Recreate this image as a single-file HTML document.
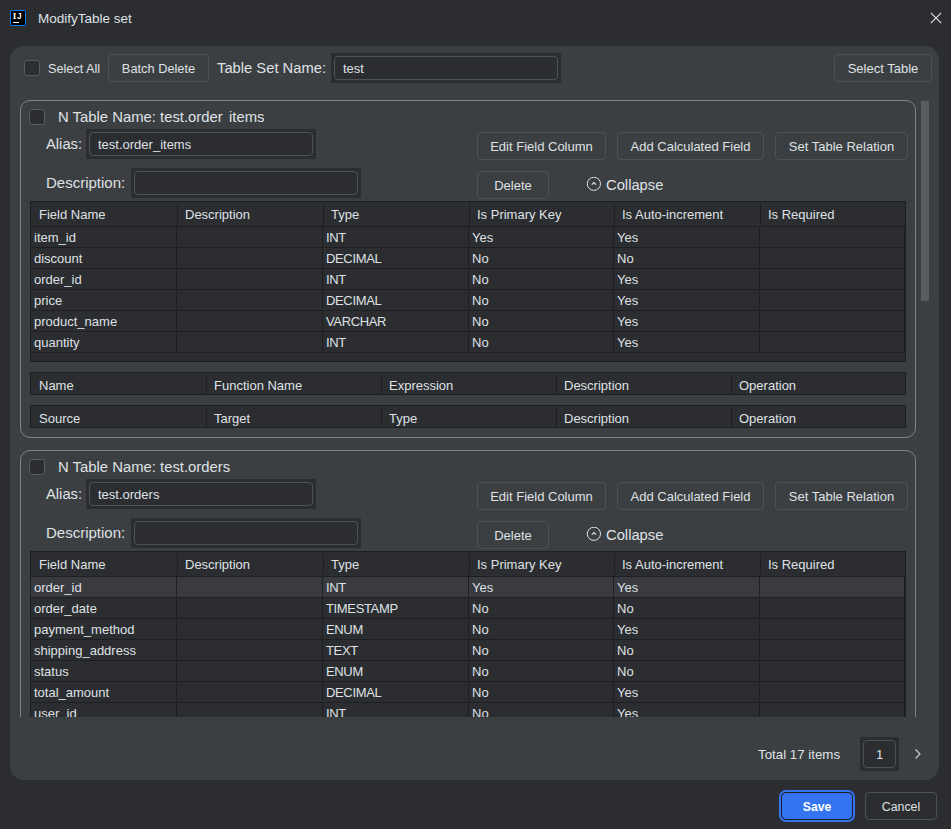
<!DOCTYPE html>
<html><head><meta charset="utf-8"><title>ModifyTable set</title>
<style>
*{box-sizing:border-box;margin:0;padding:0}
html,body{width:951px;height:829px;overflow:hidden;background:#2b2d30}
body{font-family:"Liberation Sans",sans-serif;font-size:13px;color:#dfe1e5;position:relative}
.abs{position:absolute}
#panel{position:absolute;left:10px;top:46px;width:929px;height:734px;background:#3c3f41;border-radius:14px}
.cb{position:absolute;width:16px;height:16px;border:1px solid #595c61;border-radius:3px;background:#2b2d30}
.btn{position:absolute;height:28px;border:1px solid #4e5157;border-radius:4px;text-align:center;line-height:28px;font-size:13px;color:#dfe1e5;white-space:nowrap}
.inp{position:absolute;height:30px;background:#2b2d30;padding:3px}
.inp .in{width:100%;height:24px;border:1px solid #4e5157;border-radius:4px;line-height:24px;padding-left:8px;font-size:13px;white-space:nowrap}
.lbl{position:absolute;font-size:14.75px;line-height:18px;white-space:nowrap}
#scroll{position:absolute;left:20px;top:100px;width:912px;height:617px;overflow:hidden}
.card{position:absolute;left:0;width:896px;height:338px;border:1px solid #828282;border-radius:10px}
.ttl{position:absolute;left:37px;top:7px;font-size:14.85px;line-height:18px;white-space:nowrap}
.colico{position:absolute}
.tbl{background:#2b2d30;border:1px solid #1e1f22;width:876px}
.thead{display:flex;height:25px;border-bottom:1px solid #1e1f22}
.five .thead{height:21px;border-bottom:none}
.th{flex:0 0 auto;width:146px;padding-left:8px;line-height:26px;position:relative;white-space:nowrap}
.five .th{line-height:25px}
.th+.th:before{content:"";position:absolute;left:1px;top:1px;bottom:1px;width:1px;background:#1e1f22}
.tr{display:flex;height:21px;border-bottom:1px solid #1e1f22}
.tr.hov{background:#393b40}
.td{flex:0 0 auto;width:146px;padding-left:3px;line-height:22px;white-space:nowrap}
.td+.td{border-left:1px solid #1e1f22}
.td:last-child{border-right:1px solid #1e1f22}
.td:nth-child(3){letter-spacing:-0.35px}
.main{padding-bottom:8px}
.main .th:nth-child(1),.main .th:nth-child(4),.main .td:nth-child(1),.main .td:nth-child(4){width:145px}
.main .th+.th{padding-left:9px}
.five .th{width:175px}
.five .th:last-child{width:174px}
.five .th+.th:before{left:0;bottom:0}
</style></head><body>
<svg class="abs" style="left:10px;top:10px" width="16" height="16" viewBox="0 0 16 16"><rect x="0.5" y="0.5" width="15" height="15" rx="0.6" fill="#000" stroke="#087cfa"/><rect x="3" y="12" width="6" height="1" fill="#fff"/><text x="2.75" y="9" font-family="Liberation Serif, serif" font-weight="bold" font-size="9.2" fill="#fff">I</text><text x="7" y="9" font-family="Liberation Sans, sans-serif" font-weight="bold" font-size="8.2" fill="#fff">J</text></svg>
<div class="abs" style="left:38px;top:11px;line-height:16px;font-size:13.5px">ModifyTable set</div>
<svg class="abs" style="left:928px;top:10px" width="16" height="16" viewBox="0 0 16 16"><path d="M2.8 2.8 L13.2 13.2 M13.2 2.8 L2.8 13.2" stroke="#e6e7ea" stroke-width="1.1" fill="none"/></svg>
<div id="panel"></div>
<div class="cb" style="left:24px;top:60px"></div>
<div class="abs" style="left:48px;top:61px;line-height:17px;font-size:12.7px">Select All</div>
<div class="btn" style="left:108px;top:54px;width:101px;font-size:12.8px">Batch Delete</div>
<div class="lbl" style="left:217px;top:59px">Table Set Name:</div>
<div class="inp" style="left:331px;top:53px;width:230px"><div class="in">test</div></div>
<div class="btn" style="left:834px;top:54px;width:98px">Select Table</div>
<div id="scroll">

<div class="card" style="top:0px">
  <div class="cb" style="left:8px;top:8px"></div>
  <div class="ttl">N Table Name: test.order<span style="letter-spacing:2.2px"> </span>items</div>
  <div class="lbl" style="left:25px;top:34px">Alias:</div>
  <div class="inp" style="left:65px;top:28px;width:230px"><div class="in">test.order_items</div></div>
  <div class="lbl" style="left:25px;top:73px;font-size:15px">Description:</div>
  <div class="inp" style="left:110px;top:67px;width:230px"><div class="in"></div></div>
  <div class="btn" style="left:456px;top:31px;width:129px">Edit Field Column</div>
  <div class="btn" style="left:596px;top:31px;width:147px">Add Calculated Field</div>
  <div class="btn" style="left:754px;top:31px;width:133px">Set Table Relation</div>
  <div class="btn" style="left:456px;top:70px;width:72px">Delete</div>
  <svg class="colico" style="left:565px;top:76px" width="16" height="16" viewBox="0 0 16 16"><circle cx="7.9" cy="6.8" r="6.6" fill="none" stroke="#dfe1e5" stroke-width="1"/><path d="M5.8 7.6 L7.9 5.5 L10 7.6" fill="none" stroke="#dfe1e5" stroke-width="1.2"/></svg>
  <div class="lbl" style="left:585px;top:75px">Collapse</div>
  <div style="position:absolute;left:9px;top:100px;width:876px"><div class="tbl main"><div class="thead"><div class="th">Field Name</div><div class="th">Description</div><div class="th">Type</div><div class="th">Is Primary Key</div><div class="th">Is Auto-increment</div><div class="th">Is Required</div></div><div class="tr"><div class="td">item_id</div><div class="td"></div><div class="td">INT</div><div class="td">Yes</div><div class="td">Yes</div><div class="td"></div></div><div class="tr"><div class="td">discount</div><div class="td"></div><div class="td">DECIMAL</div><div class="td">No</div><div class="td">No</div><div class="td"></div></div><div class="tr"><div class="td">order_id</div><div class="td"></div><div class="td">INT</div><div class="td">No</div><div class="td">Yes</div><div class="td"></div></div><div class="tr"><div class="td">price</div><div class="td"></div><div class="td">DECIMAL</div><div class="td">No</div><div class="td">Yes</div><div class="td"></div></div><div class="tr"><div class="td">product_name</div><div class="td"></div><div class="td">VARCHAR</div><div class="td">No</div><div class="td">Yes</div><div class="td"></div></div><div class="tr"><div class="td">quantity</div><div class="td"></div><div class="td">INT</div><div class="td">No</div><div class="td">Yes</div><div class="td"></div></div></div></div>
  <div style="position:absolute;left:9px;top:271px;width:876px"><div class="tbl five"><div class="thead"><div class="th">Name</div><div class="th">Function Name</div><div class="th">Expression</div><div class="th">Description</div><div class="th">Operation</div></div></div></div>
  <div style="position:absolute;left:9px;top:304px;width:876px"><div class="tbl five"><div class="thead"><div class="th">Source</div><div class="th">Target</div><div class="th">Type</div><div class="th">Description</div><div class="th">Operation</div></div></div></div>
</div>

<div class="card" style="top:350px">
  <div class="cb" style="left:8px;top:8px"></div>
  <div class="ttl">N Table Name: test.orders</div>
  <div class="lbl" style="left:25px;top:34px">Alias:</div>
  <div class="inp" style="left:65px;top:28px;width:230px"><div class="in">test.orders</div></div>
  <div class="lbl" style="left:25px;top:73px;font-size:15px">Description:</div>
  <div class="inp" style="left:110px;top:67px;width:230px"><div class="in"></div></div>
  <div class="btn" style="left:456px;top:31px;width:129px">Edit Field Column</div>
  <div class="btn" style="left:596px;top:31px;width:147px">Add Calculated Field</div>
  <div class="btn" style="left:754px;top:31px;width:133px">Set Table Relation</div>
  <div class="btn" style="left:456px;top:70px;width:72px">Delete</div>
  <svg class="colico" style="left:565px;top:76px" width="16" height="16" viewBox="0 0 16 16"><circle cx="7.9" cy="6.8" r="6.6" fill="none" stroke="#dfe1e5" stroke-width="1"/><path d="M5.8 7.6 L7.9 5.5 L10 7.6" fill="none" stroke="#dfe1e5" stroke-width="1.2"/></svg>
  <div class="lbl" style="left:585px;top:75px">Collapse</div>
  <div style="position:absolute;left:9px;top:100px;width:876px"><div class="tbl main"><div class="thead"><div class="th">Field Name</div><div class="th">Description</div><div class="th">Type</div><div class="th">Is Primary Key</div><div class="th">Is Auto-increment</div><div class="th">Is Required</div></div><div class="tr hov"><div class="td">order_id</div><div class="td"></div><div class="td">INT</div><div class="td">Yes</div><div class="td">Yes</div><div class="td"></div></div><div class="tr"><div class="td">order_date</div><div class="td"></div><div class="td">TIMESTAMP</div><div class="td">No</div><div class="td">No</div><div class="td"></div></div><div class="tr"><div class="td">payment_method</div><div class="td"></div><div class="td">ENUM</div><div class="td">No</div><div class="td">Yes</div><div class="td"></div></div><div class="tr"><div class="td">shipping_address</div><div class="td"></div><div class="td">TEXT</div><div class="td">No</div><div class="td">No</div><div class="td"></div></div><div class="tr"><div class="td">status</div><div class="td"></div><div class="td">ENUM</div><div class="td">No</div><div class="td">No</div><div class="td"></div></div><div class="tr"><div class="td">total_amount</div><div class="td"></div><div class="td">DECIMAL</div><div class="td">No</div><div class="td">Yes</div><div class="td"></div></div><div class="tr"><div class="td">user_id</div><div class="td"></div><div class="td">INT</div><div class="td">No</div><div class="td">Yes</div><div class="td"></div></div></div></div>
  <div style="position:absolute;left:9px;top:271px;width:876px"><div class="tbl five"><div class="thead"><div class="th">Name</div><div class="th">Function Name</div><div class="th">Expression</div><div class="th">Description</div><div class="th">Operation</div></div></div></div>
  <div style="position:absolute;left:9px;top:304px;width:876px"><div class="tbl five"><div class="thead"><div class="th">Source</div><div class="th">Target</div><div class="th">Type</div><div class="th">Description</div><div class="th">Operation</div></div></div></div>
</div>
</div>
<div class="abs" style="left:921px;top:101px;width:8px;height:200px;background:#5a5c5e"></div>
<div class="abs" style="left:758px;top:747px;line-height:16px;font-size:13.3px">Total 17 items</div>
<div class="inp" style="left:860px;top:737px;width:39px;height:34px"><div class="in" style="height:28px;line-height:27px;padding:0;text-align:center">1</div></div>
<svg class="abs" style="left:912px;top:748px" width="12" height="12" viewBox="0 0 12 12"><path d="M3.5 1.5 L8 6 L3.5 10.5" stroke="#c9ccd1" stroke-width="1.2" fill="none"/></svg>
<div class="btn" style="left:782px;top:793px;width:70px;height:26px;line-height:26px;background:#3574f0;border-color:#3574f0;font-weight:bold;font-size:12.2px;color:#fff;box-shadow:0 0 0 1px #1e1f22,0 0 0 3px #3574f0">Save</div>
<div class="btn" style="left:865px;top:792px;width:72px;font-size:12.3px">Cancel</div>
</body></html>
